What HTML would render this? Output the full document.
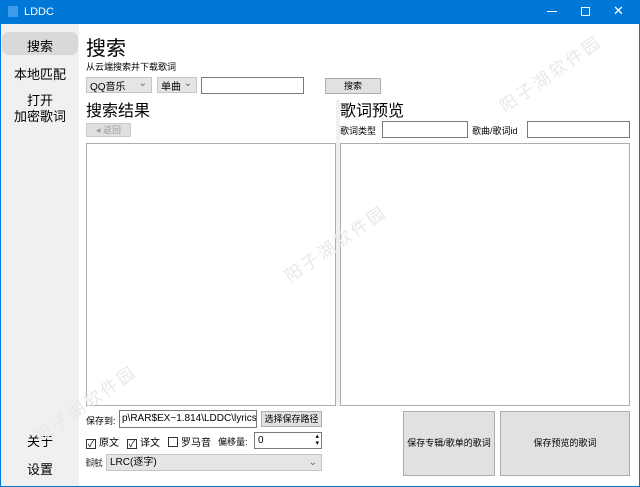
<!DOCTYPE html>
<html><head><meta charset="utf-8"><style>
*{margin:0;padding:0;box-sizing:border-box}
body{width:640px;height:487px;overflow:hidden;background:#fff;font-family:"Liberation Sans","Noto Sans CJK SC",sans-serif;color:#000;position:relative;font-size:10px}
.a{position:absolute;white-space:nowrap}
.box{position:absolute;border:1px solid #adadad;background:#fff}
.btn{position:absolute;background:#e1e1e1;border:1px solid #adadad;text-align:center;font-size:9px}
.cb{position:absolute;background:#e5e5e5;border:1px solid #c5c5c5;font-size:10px;padding-left:3px}
.chk{display:inline-block;width:10px;height:10px;border:1px solid #333;vertical-align:-1px;margin-right:3px;font-size:9px;line-height:8px;text-align:center}
.wm{position:absolute;color:#e8e8e8;font-size:17px;transform:rotate(-35deg);white-space:nowrap;letter-spacing:3px}
</style></head><body>
<div class="a" style="left:0;top:0;width:640px;height:24px;background:#0078d7"></div>
<div class="a" style="left:8px;top:6px;width:10px;height:11px;background:#3d9be9"></div>
<div class="a" style="left:24px;top:6px;color:#fff;font-size:11px">LDDC</div>
<div class="a" style="left:547px;top:11px;width:10px;height:1px;background:#fff"></div>
<div class="a" style="left:581px;top:7px;width:9px;height:9px;border:1px solid #fff"></div>
<div class="a" style="left:613px;top:3px;color:#fff;font-size:13px">✕</div>
<div class="a" style="left:0;top:24px;width:1px;height:463px;background:#0078d7"></div>
<div class="a" style="left:639px;top:24px;width:1px;height:463px;background:#0078d7"></div>
<div class="a" style="left:0;top:486px;width:640px;height:1px;background:#0078d7"></div>
<div class="a" style="left:1px;top:24px;width:78px;height:462px;background:#f0f0f0"></div>
<div class="a" style="left:2px;top:32px;width:76px;height:23px;background:#d9d9d9;border-radius:7px"></div>
<div class="a" style="left:27px;top:36px;font-size:13px">搜索</div>
<div class="a" style="left:14px;top:64px;font-size:13px">本地匹配</div>
<div class="a" style="left:27px;top:90px;font-size:13px">打开</div>
<div class="a" style="left:14px;top:106px;font-size:13px">加密歌词</div>
<div class="a" style="left:27px;top:431px;font-size:13px">关于</div>
<div class="a" style="left:27px;top:459px;font-size:13px">设置</div>

<div class="a" style="left:86px;top:32px;font-size:20px">搜索</div>
<div class="a" style="left:86px;top:60px;font-size:9px">从云端搜索并下载歌词</div>
<div class="cb" style="left:86px;top:77px;width:66px;height:16px">QQ音乐<span style="float:right;margin-right:4px;color:#666">⌄</span></div>
<div class="cb" style="left:157px;top:77px;width:40px;height:16px">单曲<span style="float:right;margin-right:4px;color:#666">⌄</span></div>
<div class="box" style="left:201px;top:77px;width:103px;height:17px;border-color:#7a7a7a"></div>
<div class="btn" style="left:325px;top:78px;width:56px;height:16px;line-height:14px">搜索</div>
<div class="a" style="left:86px;top:97px;font-size:16px">搜索结果</div>
<div class="btn" style="left:86px;top:123px;width:45px;height:14px;line-height:12px;color:#999;border-color:#ccc;background:#e0e0e0">◂ 返回</div>
<div class="box" style="left:86px;top:143px;width:250px;height:263px"></div>
<div class="a" style="left:336px;top:100px;width:4px;height:306px;background:#f0f0f0"></div>
<div class="a" style="left:340px;top:97px;font-size:16px">歌词预览</div>
<div class="a" style="left:340px;top:124px;font-size:9px">歌词类型</div>
<div class="box" style="left:382px;top:121px;width:86px;height:17px;border-color:#7a7a7a"></div>
<div class="a" style="left:472px;top:124px;font-size:9px">歌曲/歌词id</div>
<div class="box" style="left:527px;top:121px;width:103px;height:17px;border-color:#7a7a7a"></div>
<div class="box" style="left:340px;top:143px;width:290px;height:263px"></div>

<div class="wm" style="left:490px;top:60px">阳子湖软件园</div>
<div class="wm" style="left:275px;top:230px">阳子湖软件园</div>
<div class="wm" style="left:25px;top:390px">阳子湖软件园</div>

<div class="a" style="left:86px;top:414px;font-size:9px">保存到:</div>
<div class="box" style="left:119px;top:410px;width:138px;height:18px;border-color:#7a7a7a;font-size:10px;padding:2px 0 0 2px;overflow:hidden">p\RAR$EX~1.814\LDDC\lyrics</div>
<div class="btn" style="left:261px;top:411px;width:61px;height:16px;line-height:14px">选择保存路径</div>
<div class="a" style="left:86px;top:434px;font-size:10px"><span class="chk">✓</span>原文</div>
<div class="a" style="left:127px;top:434px;font-size:10px"><span class="chk">✓</span>译文</div>
<div class="a" style="left:168px;top:434px;font-size:10px"><span class="chk"></span>罗马音</div>
<div class="a" style="left:218px;top:435px;font-size:9px">偏移量:</div>
<div class="box" style="left:254px;top:432px;width:68px;height:17px;border-color:#7a7a7a;font-size:10px;padding:2px 0 0 3px">0<span style="position:absolute;right:2px;top:0;font-size:7px;line-height:7px">▴<br>▾</span></div>
<div class="a" style="left:86px;top:456px;font-size:9px;transform:scaleX(0.45);transform-origin:0 0">歌词格式:</div>
<div class="cb" style="left:106px;top:454px;width:216px;height:17px;line-height:15px">LRC(逐字)<span style="float:right;margin-right:4px;color:#666">⌄</span></div>
<div class="btn" style="left:403px;top:411px;width:92px;height:65px;line-height:63px">保存专辑/歌单的歌词</div>
<div class="btn" style="left:500px;top:411px;width:130px;height:65px;line-height:63px">保存预览的歌词</div>
</body></html>
